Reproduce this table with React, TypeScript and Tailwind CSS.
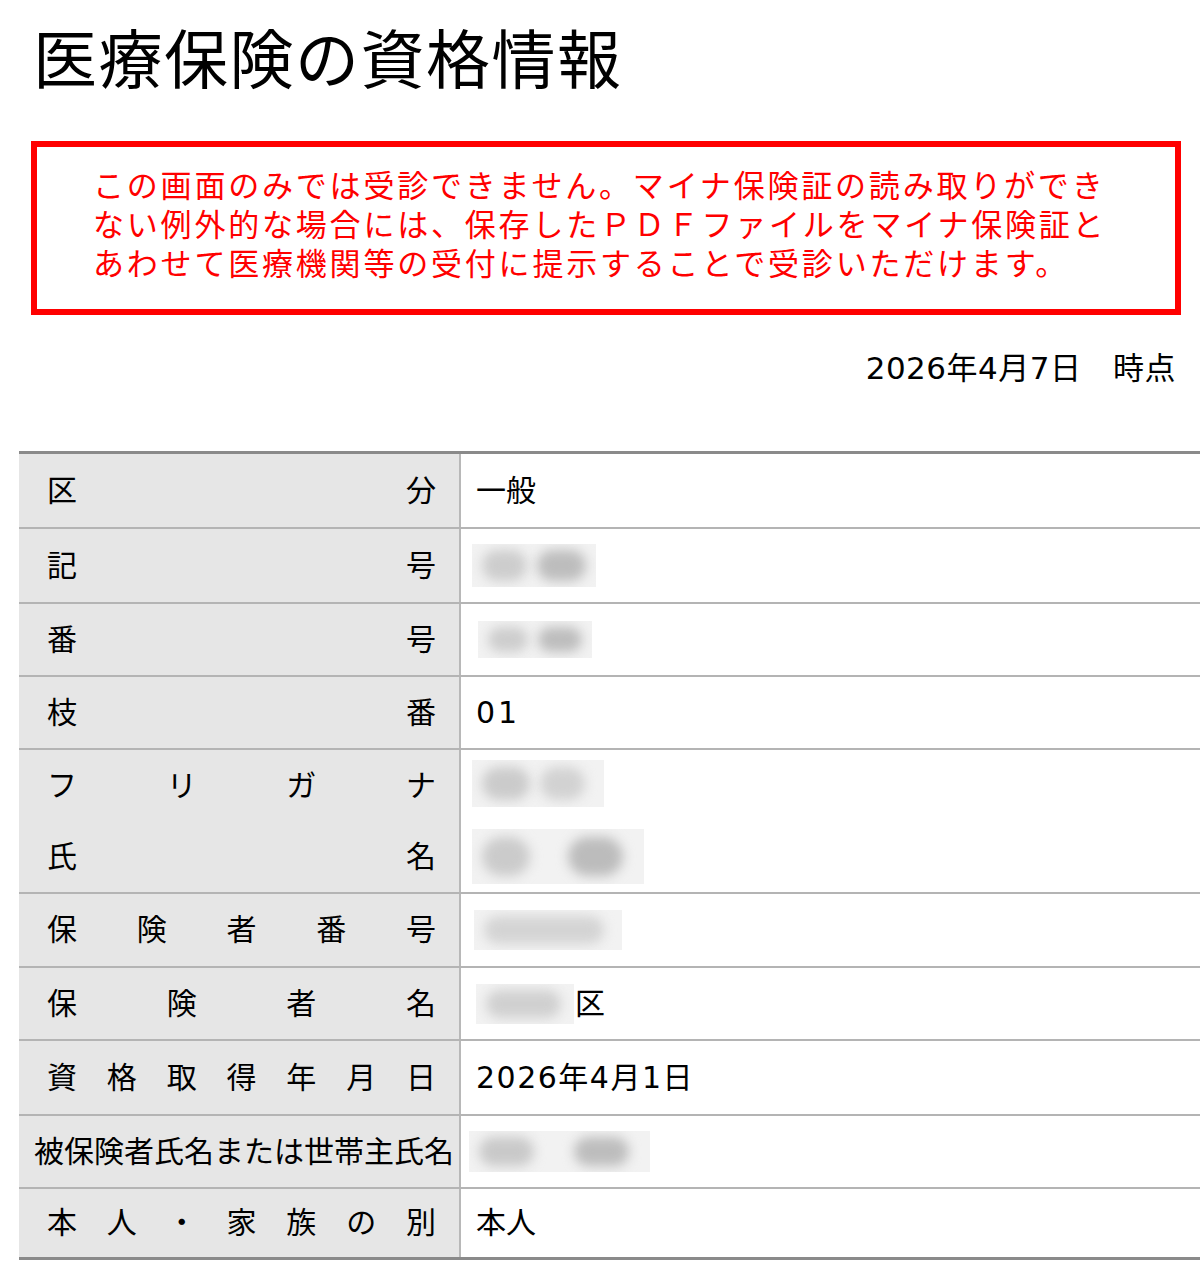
import React from 'react';

const font = { fontFamily: '"DejaVu Sans", "Noto Sans CJK JP", sans-serif' };

type Blob = { w: number; shade: string };

function Blurred({ ml, w, h, blobs, gap = 10 }: { ml: number; w: number; h: number; blobs: Blob[]; gap?: number }) {
  return (
    <div
      className="flex items-center overflow-hidden bg-[#f2f2f2] px-[10px]"
      style={{ marginLeft: ml, width: w, height: h, gap }}
    >
      {blobs.map((b, i) => (
        <div key={i} className="h-[70%] rounded-full blur-[6px]" style={{ width: b.w, backgroundColor: b.shade }} />
      ))}
    </div>
  );
}

function Label({ chars, className = '' }: { chars: string[]; className?: string }) {
  return (
    <div className={`flex items-center justify-between pl-[28px] pr-[23px] ${className}`}>
      {chars.map((c, i) => (
        <span key={i}>{c}</span>
      ))}
    </div>
  );
}

function Row({ h, label, children }: { h: number; label: React.ReactNode; children: React.ReactNode }) {
  return (
    <div className="flex border-b-2 border-[#b4b4b4] last:border-b-[3px] last:border-[#8a8a8a]" style={{ height: h }}>
      <div className="flex w-[442px] shrink-0 flex-col justify-center border-r-2 border-[#b8b8b8] bg-[#e6e6e6]">
        {label}
      </div>
      <div className="flex flex-1 flex-col justify-center pl-[15px]">{children}</div>
    </div>
  );
}

export default function App() {
  return (
    <div className="min-h-[1280px] w-[1200px] bg-white text-black" style={font}>
      <h1 className="pl-[33px] pt-[29px] text-[64px] leading-[64px] font-normal tracking-[1.5px]">医療保険の資格情報</h1>

      {/* 注意書き */}
      <div className="ml-[31px] mt-[48px] w-[1150px] border-[6px] border-[#ff0000] pb-[25px] pl-[56px] pt-[20px]">
        <p className="text-[31px] leading-[39px] tracking-[2.8px] text-[#ff0000]">
          この画面のみでは受診できません。マイナ保険証の読み取りができ
          <br />
          ない例外的な場合には、保存したＰＤＦファイルをマイナ保険証と
          <br />
          あわせて医療機関等の受付に提示することで受診いただけます。
        </p>
      </div>

      <div className="mt-[33px] pr-[24px] text-right text-[31px] leading-[40px] tracking-[0.5px]">2026年4月7日　時点</div>

      {/* 資格情報テーブル */}
      <div className="ml-[19px] mt-[63px] border-t-[3px] border-[#8a8a8a] text-[30px] leading-[40px]">
        <Row h={75} label={<Label chars={['区', '分']} />}>
          <span>一般</span>
        </Row>
        <Row h={75} label={<Label chars={['記', '号']} />}>
          <Blurred ml={-4} w={124} h={43} blobs={[{ w: 45, shade: '#cdcdcd' }, { w: 50, shade: '#bdbdbd' }]} />
        </Row>
        <Row h={73} label={<Label chars={['番', '号']} />}>
          <Blurred ml={2} w={114} h={37} blobs={[{ w: 40, shade: '#cdcdcd' }, { w: 45, shade: '#bdbdbd' }]} />
        </Row>
        <Row h={73} label={<Label chars={['枝', '番']} />}>
          <span className="tracking-[3px]">01</span>
        </Row>
        <Row
          h={144}
          label={
            <>
              <Label className="h-[71px]" chars={['フ', 'リ', 'ガ', 'ナ']} />
              <Label className="h-[71px]" chars={['氏', '名']} />
            </>
          }
        >
          <div className="flex h-[71px] items-center pb-[4px]">
            <Blurred ml={-4} w={132} h={47} blobs={[{ w: 48, shade: '#cbcbcb' }, { w: 45, shade: '#d2d2d2' }]} />
          </div>
          <div className="flex h-[71px] items-center">
            <Blurred ml={-4} w={172} h={55} gap={38} blobs={[{ w: 48, shade: '#cbcbcb' }, { w: 55, shade: '#bcbcbc' }]} />
          </div>
        </Row>
        <Row h={74} label={<Label chars={['保', '険', '者', '番', '号']} />}>
          <Blurred ml={-2} w={148} h={40} blobs={[{ w: 120, shade: '#d4d4d4' }]} />
        </Row>
        <Row h={73} label={<Label chars={['保', '険', '者', '名']} />}>
          <div className="flex items-center">
            <Blurred ml={0} w={98} h={40} blobs={[{ w: 75, shade: '#d0d0d0' }]} />
            <span className="ml-[1px]">区</span>
          </div>
        </Row>
        <Row h={75} label={<Label chars={['資', '格', '取', '得', '年', '月', '日']} />}>
          <span className="tracking-[1.5px]">2026年4月1日</span>
        </Row>
        <Row
          h={73}
          label={<div className="whitespace-nowrap pl-[15px]">被保険者氏名または世帯主氏名</div>}
        >
          <Blurred ml={-7} w={181} h={41} gap={40} blobs={[{ w: 55, shade: '#c9c9c9' }, { w: 55, shade: '#bdbdbd' }]} />
        </Row>
        <Row h={71} label={<Label chars={['本', '人', '・', '家', '族', 'の', '別']} />}>
          <span>本人</span>
        </Row>
      </div>
    </div>
  );
}
